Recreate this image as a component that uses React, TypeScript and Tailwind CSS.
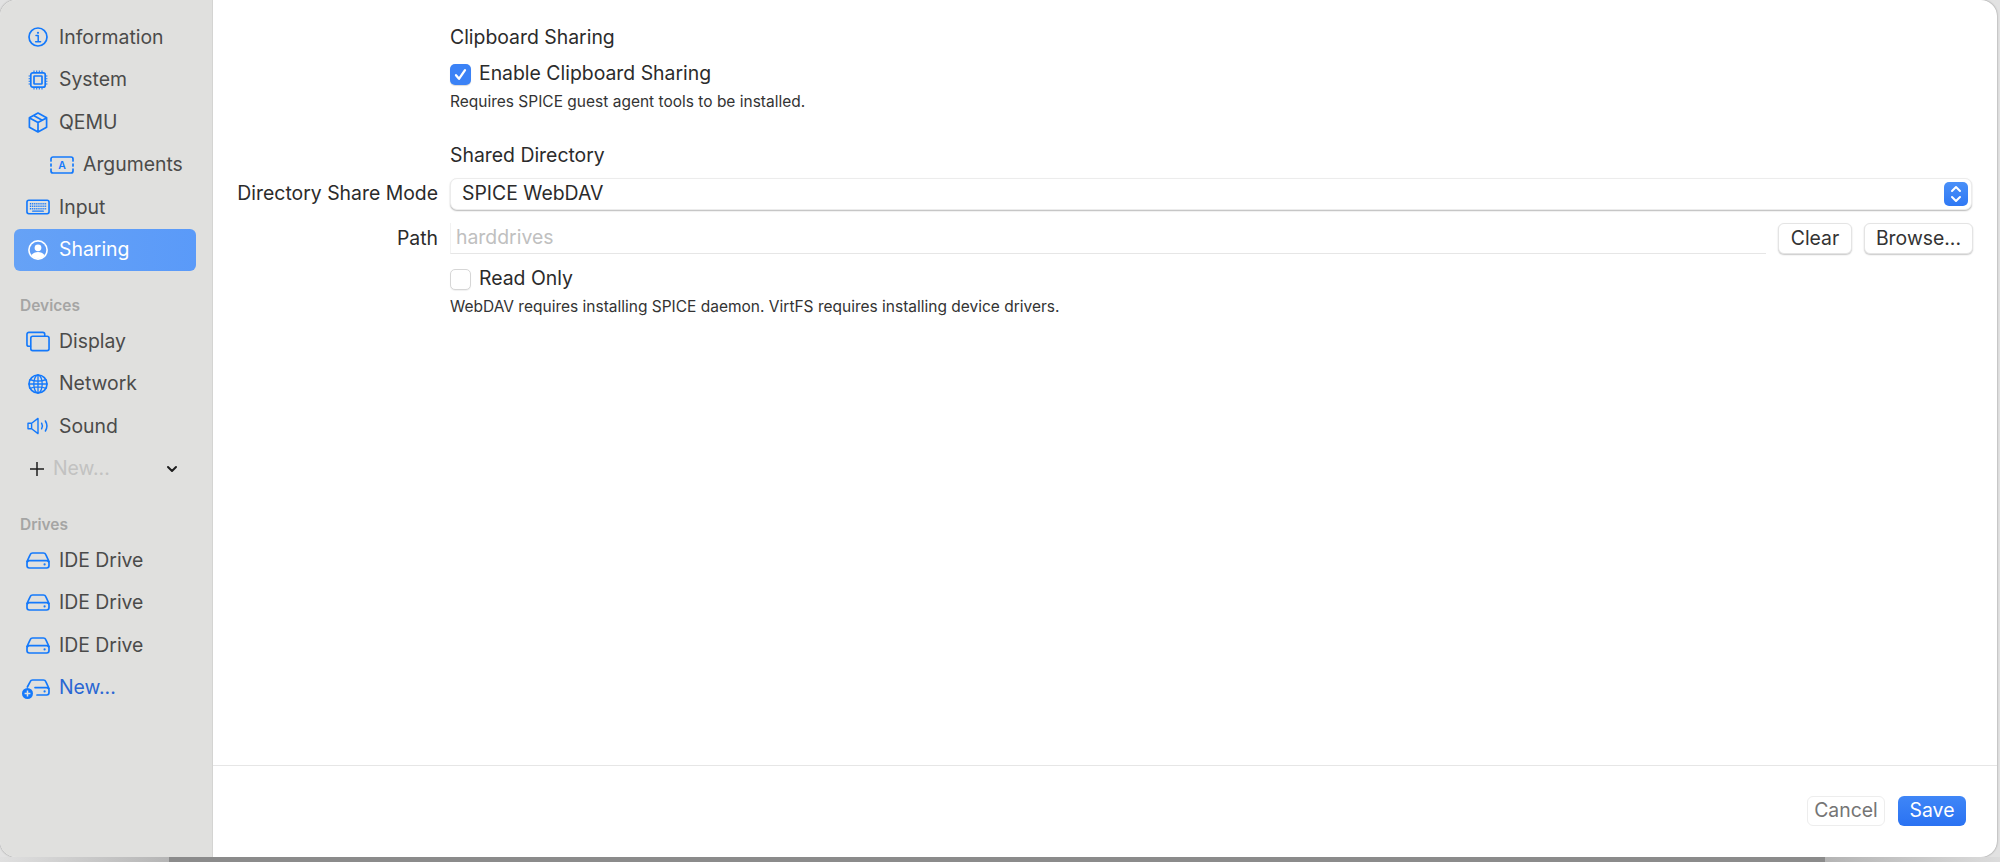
import React from 'react';

const font = 'font-["Inter","Liberation_Sans",sans-serif]';

const Ic: React.FC<{ w?: number; h?: number; vb?: string; children: React.ReactNode; cls?: string }> = ({ w = 24, h = 24, vb = '0 0 24 24', children, cls = 'text-[#1479fb]' }) => (
  <svg width={w} height={h} viewBox={vb} fill="none" stroke="currentColor" strokeWidth="1.7" strokeLinecap="round" strokeLinejoin="round" className={cls}>
    {children}
  </svg>
);

const InfoIcon = () => (
  <Ic w={20} h={20} vb="0 0 20 20">
    <circle cx="10" cy="10" r="9" />
    <circle cx="10" cy="5.8" r="1.1" fill="currentColor" stroke="none" />
    <path d="M8 8.6h2.2v6M7.6 14.8h5" strokeWidth="1.5" />
  </Ic>
);

const ChipIcon = () => (
  <Ic w={20} h={20} vb="0 0 20 20">
    <rect x="2.8" y="2.8" width="14.4" height="14.4" rx="2" />
    <rect x="6" y="6" width="8" height="8" rx="0.6" />
    <path d="M6 .6v1.6M8.7.6v1.6M11.3.6v1.6M14 .6v1.6M6 17.8v1.6M8.7 17.8v1.6M11.3 17.8v1.6M14 17.8v1.6M.6 6h1.6M.6 8.7h1.6M.6 11.3h1.6M.6 14h1.6M17.8 6h1.6M17.8 8.7h1.6M17.8 11.3h1.6M17.8 14h1.6" strokeWidth="1.1" strokeLinecap="butt" />
  </Ic>
);

const BoxIcon = () => (
  <Ic w={20} h={21} vb="0 0 20 21">
    <path d="M10 1l8.6 4.8v9.4L10 20l-8.6-4.8V5.8zM1.6 5.9L10 10.5l8.4-4.6M10 10.5V20M5.6 3.4l8.6 4.8" />
  </Ic>
);

const ArgIcon = () => (
  <Ic w={24} h={18} vb="0 0 24 18">
    <path d="M1 5V3a2 2 0 0 1 2-2h18a2 2 0 0 1 2 2v2M1 13v2a2 2 0 0 0 2 2h18a2 2 0 0 0 2-2v-2M1 8v2M23 8v2" />
    <text x="12" y="13" textAnchor="middle" fontSize="10.5" fontWeight="600" fill="currentColor" stroke="none" fontFamily="Inter">A</text>
  </Ic>
);

const KeyboardIcon = () => (
  <Ic w={25} h={16} vb="0 0 25 16">
    <rect x="1" y="1" width="23" height="14" rx="2" />
    <path d="M4 4.6h17M4 7.2h17M4 9.8h17" strokeWidth="1.5" strokeDasharray="1.2 0.8" strokeLinecap="butt" />
    <path d="M7 12.3h11" strokeWidth="1.4" />
  </Ic>
);

const PersonIcon = () => (
  <svg width="20" height="20" viewBox="0 0 20 20" className="text-white">
    <circle cx="10" cy="10" r="9.9" fill="currentColor" />
    <circle cx="10" cy="10" r="8.3" fill="#5f9df7" />
    <circle cx="10" cy="7.8" r="3.4" fill="currentColor" />
    <path d="M3.4 15.3C5 12.7 7.4 12 10 12s5 .7 6.6 3.3A8.2 8.2 0 0 1 10 18.6a8.2 8.2 0 0 1-6.6-3.3z" fill="currentColor" />
  </svg>
);

const DisplayIcon = () => (
  <Ic w={25} h={21} vb="0 0 25 21">
    <path d="M4.6 15.5H3a2 2 0 0 1-2-2V3a2 2 0 0 1 2-2h14.5a2 2 0 0 1 2 2v1.4" />
    <rect x="5" y="5" width="19" height="15" rx="2" />
  </Ic>
);

const GlobeIcon = () => (
  <Ic w={20} h={20} vb="0 0 20 20">
    <circle cx="10" cy="10" r="9" />
    <ellipse cx="10" cy="10" rx="4.2" ry="9" strokeWidth="1.3" />
    <path d="M10 1v18M2 5.6c4.5 2 11.5 2 16 0M2 14.4c4.5-2 11.5-2 16 0M1 10h18" strokeWidth="1.3" />
  </Ic>
);

const SpeakerIcon = () => (
  <Ic w={23} h={18} vb="0 0 23 18">
    <path d="M1 6.2v5.6h3.6L11 16.6V1.4L4.6 6.2zM4.6 6.2v5.6" strokeWidth="1.4" />
    <path d="M14.6 6.2c1 1.7 1 3.9 0 5.6M18.4 4c1.9 3.1 1.9 6.9 0 10" strokeWidth="1.5" />
  </Ic>
);

const DriveIcon = () => (
  <Ic w={24} h={17} vb="0 0 24 17">
    <path d="M1 9.5L4.2 2.6A2.6 2.6 0 0 1 6.6 1h10.8a2.6 2.6 0 0 1 2.4 1.6L23 9.5" />
    <rect x="1" y="8.6" width="22" height="7.4" rx="2.4" />
    <circle cx="18.6" cy="12.4" r="1.1" fill="currentColor" stroke="none" />
  </Ic>
);

const NewDriveIcon = () => (
  <span className="relative flex">
    <Ic w={24} h={17} vb="0 0 24 17">
      <path d="M1.4 8L4.2 2.6A2.6 2.6 0 0 1 6.6 1h10.8a2.6 2.6 0 0 1 2.4 1.6L23 9.5" />
      <path d="M9 8.6h11.6A2.4 2.4 0 0 1 23 11v2.6a2.4 2.4 0 0 1-2.4 2.4H11" />
      <circle cx="18.6" cy="12.4" r="1.1" fill="currentColor" stroke="none" />
    </Ic>
    <svg width="11" height="11" viewBox="0 0 11 11" className="absolute left-[-4px] top-[9px]">
      <circle cx="5.5" cy="5.5" r="5.5" fill="#1479fb" />
      <path d="M5.5 2.6v5.8M2.6 5.5h5.8" stroke="#e0e0de" strokeWidth="1.5" />
    </svg>
  </span>
);

const NavRow: React.FC<{ icon: React.ReactNode; label: string; active?: boolean; indent?: boolean; blue?: boolean }> = ({ icon, label, active, indent, blue }) => (
  <div className={`h-[42.5px] flex items-center rounded-[6px] text-[19.4px] ${active ? 'bg-gradient-to-r from-[#66a2f6] to-[#5a9af9] text-white' : blue ? 'text-[#2a67d3]' : 'text-[#4b4b4a]'} ${indent ? 'pl-[36px]' : 'pl-[12px]'}`}>
    <span className="w-[24px] flex justify-center shrink-0">{icon}</span>
    <span className="ml-[9px]">{label}</span>
  </div>
);

const Btn: React.FC<{ label: string; cls?: string }> = ({ label, cls = '' }) => (
  <div className={`h-[31px] flex items-center justify-center rounded-[6px] bg-white text-[19.4px] text-[#333] border-[0.5px] border-[#e4e4e4] shadow-[0_1px_1.5px_rgba(0,0,0,0.22)] ${cls}`}>{label}</div>
);

export default function App() {
  return (
    <div className={`${font} w-[2000px] h-[862px] overflow-hidden flex flex-col bg-[#e2e2e2]`}>
      <div className="w-[1997px] h-[857px] shrink-0 flex overflow-hidden rounded-[16px] shadow-[0_0_2px_rgba(0,0,0,0.45)] bg-white">
        {/* Sidebar */}
        <aside className="w-[213px] shrink-0 bg-[#e0e0de] border-r-[1px] border-[#d4d4d2] pl-[14px] pr-[16px] pt-[16px]">
          <NavRow icon={<InfoIcon />} label="Information" />
          <NavRow icon={<ChipIcon />} label="System" />
          <NavRow icon={<BoxIcon />} label="QEMU" />
          <NavRow icon={<ArgIcon />} label="Arguments" indent />
          <NavRow icon={<KeyboardIcon />} label="Input" />
          <NavRow icon={<PersonIcon />} label="Sharing" active />
          <div className="h-[49px] pt-[24px] pl-[6px] text-[15.5px] leading-[22px] font-semibold text-[#a5a5a4]">Devices</div>
          <NavRow icon={<DisplayIcon />} label="Display" />
          <NavRow icon={<GlobeIcon />} label="Network" />
          <NavRow icon={<SpeakerIcon />} label="Sound" />
          <div className="h-[42.5px] flex items-center pl-[14px] text-[19.4px] text-[#c2c2c1]">
            <svg width="18" height="18" viewBox="0 0 18 18" stroke="#1e1e1e" strokeWidth="1.5"><path d="M9 2v14M2 9h14" /></svg>
            <span className="ml-[7px]">New...</span>
            <svg width="12" height="8" viewBox="0 0 12 8" fill="none" stroke="#1e1e1e" strokeWidth="2" strokeLinecap="round" strokeLinejoin="round" className="ml-[56px]"><path d="M2 2l4 4 4-4" /></svg>
          </div>
          <div className="h-[11px]" />
          <div className="h-[38px] pt-[13px] pl-[6px] text-[15.5px] leading-[22px] font-semibold text-[#a5a5a4]">Drives</div>
          <NavRow icon={<DriveIcon />} label="IDE Drive" />
          <NavRow icon={<DriveIcon />} label="IDE Drive" />
          <NavRow icon={<DriveIcon />} label="IDE Drive" />
          <NavRow icon={<NewDriveIcon />} label="New..." blue />
        </aside>

        {/* Main */}
        <main className="flex-1 flex flex-col min-w-0">
          <div className="h-[766px] shrink-0 border-b border-[#e6e6e6] pr-[25px] text-[#2b2b2b]">
            <div className="grid grid-cols-[225px_1fr] gap-x-[12px]">
              <div />
              <div className="pt-[24px] h-[50px] text-[19.4px] leading-[26px]">Clipboard Sharing</div>
              <div />
              <div className="mt-[11px] flex items-center h-[26px]">
                <div className="w-[21px] h-[21px] rounded-[5px] bg-[#3b82f6] flex items-center justify-center shadow-[0_1px_1px_rgba(0,0,0,0.15)]">
                  <svg width="15" height="15" viewBox="0 0 15 15" fill="none" stroke="white" strokeWidth="2.3" strokeLinecap="round" strokeLinejoin="round"><path d="M3 8.2l3 3.6 6-8.6" /></svg>
                </div>
                <span className="ml-[8px] text-[19.4px]">Enable Clipboard Sharing</span>
              </div>
              <div />
              <div className="mt-[5px] text-[15.5px] leading-[20px] text-[#333]">Requires SPICE guest agent tools to be installed.</div>
              <div />
              <div className="mt-[30px] h-[26px] text-[19.4px] leading-[26px]">Shared Directory</div>

              <div className="mt-[10px] h-[32px] flex items-center justify-end text-[19.4px]">Directory Share Mode</div>
              <div className="mt-[10px] h-[32px] flex items-center justify-between rounded-[7px] bg-white pl-[11px] pr-[3px] text-[19.4px] border-[0.5px] border-[#ececec] shadow-[0_1px_1.5px_rgba(0,0,0,0.28)]">
                <span>SPICE WebDAV</span>
                <div className="w-[24px] h-[24px] rounded-[5px] bg-gradient-to-b from-[#4a90f8] to-[#2f78f4] flex items-center justify-center">
                  <svg width="14" height="20" viewBox="0 0 14 20" fill="none" stroke="white" strokeWidth="2" strokeLinecap="round" strokeLinejoin="round"><path d="M3 7l4-4 4 4M3 13l4 4 4-4" /></svg>
                </div>
              </div>

              <div className="mt-[13px] h-[31px] flex items-center justify-end text-[19.4px]">Path</div>
              <div className="mt-[13px] h-[31px] flex items-center gap-[12px]">
                <div className="flex-1 h-[31px] flex items-center pl-[5px] text-[19.4px] text-[#c0c0c0] border-b border-[#e6e6e6] border-l-[0.5px] border-l-[#f2f2f2]">harddrives</div>
                <Btn label="Clear" cls="w-[74px]" />
                <Btn label="Browse..." cls="w-[109px] mr-[-1px]" />
              </div>

              <div />
              <div className="mt-[12px] h-[26px] flex items-center">
                <div className="w-[21px] h-[21px] rounded-[5px] bg-white border border-[#d6d6d6] shadow-[0_1px_1px_rgba(0,0,0,0.06)]" />
                <span className="ml-[8px] text-[19.4px]">Read Only</span>
              </div>
              <div />
              <div className="mt-[5px] text-[15.5px] leading-[20px] text-[#333]">WebDAV requires installing SPICE daemon. VirtFS requires installing device drivers.</div>
            </div>
          </div>
          <div className="flex-1 flex justify-end items-start pt-[30px] pr-[31px] gap-[13px]">
            <div className="w-[78px] h-[30px] flex items-center justify-center rounded-[6px] border border-[#ededed] text-[19.4px] text-[#757575]">Cancel</div>
            <div className="w-[68px] h-[30px] flex items-center justify-center rounded-[6px] bg-gradient-to-b from-[#3f86f7] to-[#2a72f2] text-[19.4px] text-white">Save</div>
          </div>
        </main>
      </div>
      {/* desktop showing below the window */}
      <div className="flex-1 flex">
        <div className="w-[169px] bg-gradient-to-r from-[#e0e0e0] to-[#b5b5b5]" />
        <div className="flex-1 bg-[#8b8b8b]" />
        <div className="w-[175px] bg-gradient-to-r from-[#b4b4b4] to-[#dcdcdc]" />
      </div>
    </div>
  );
}
